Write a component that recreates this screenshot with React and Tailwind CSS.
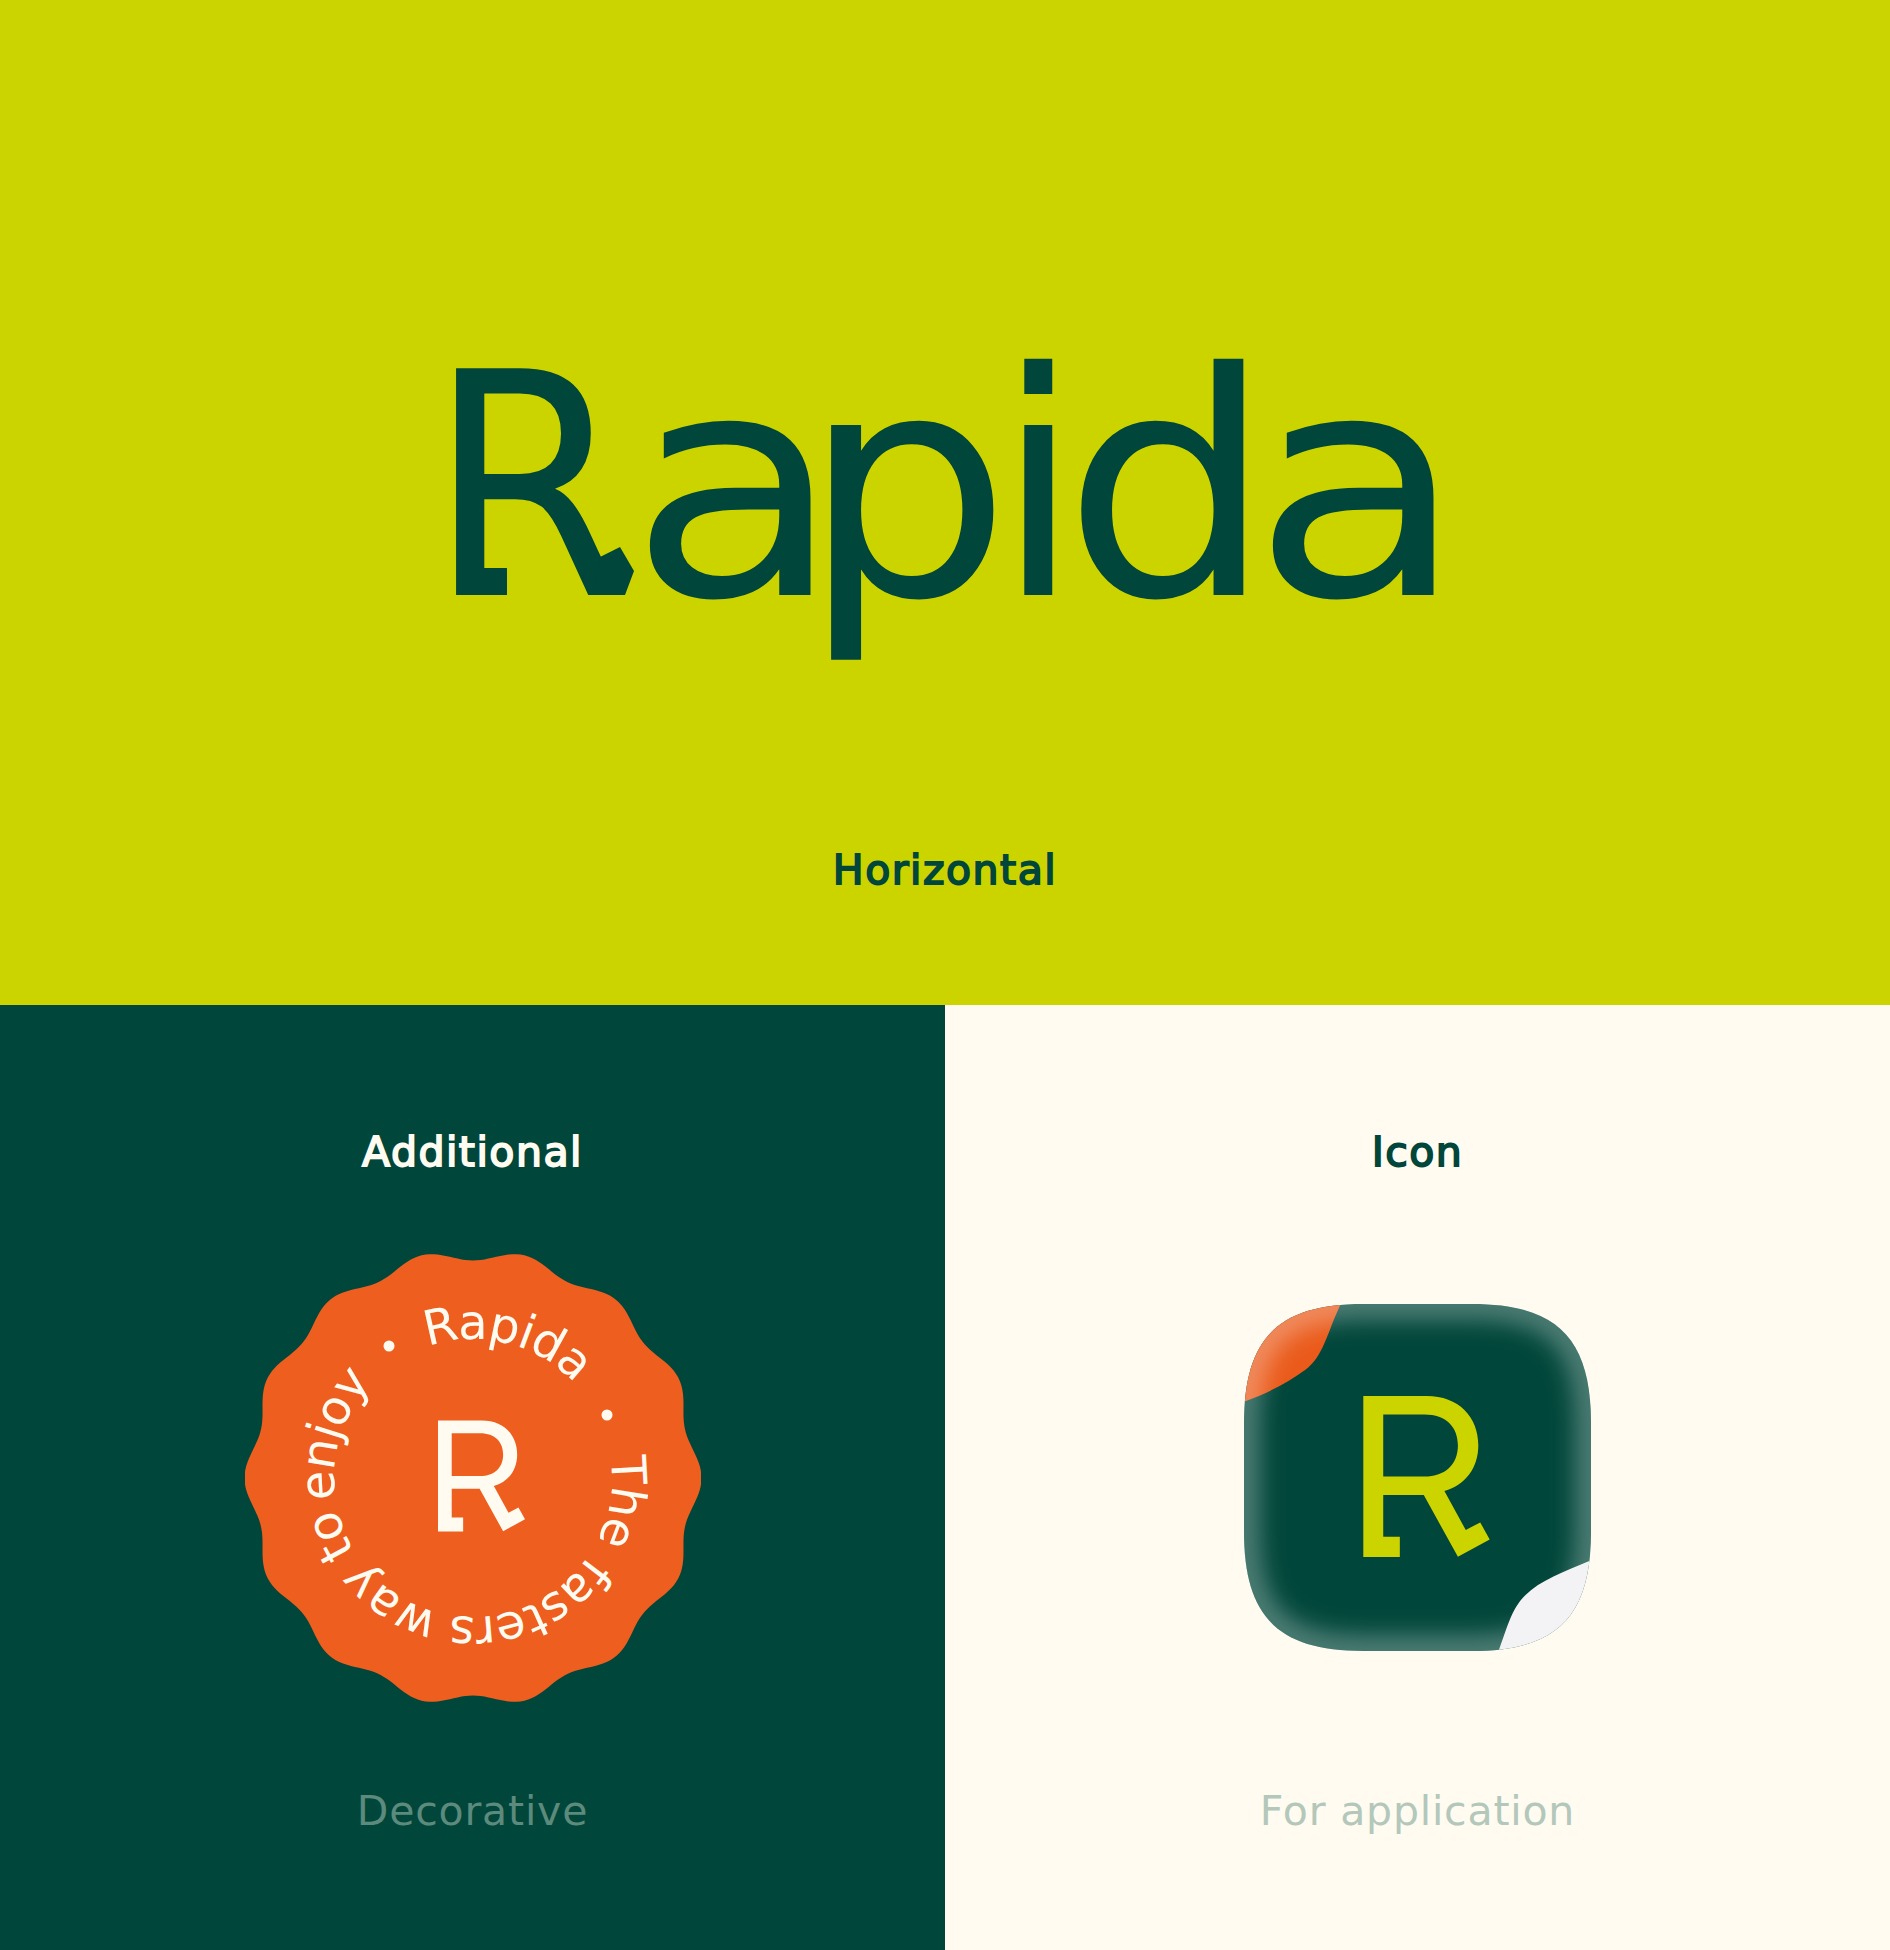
const DARK = "#01463a";

function scallopPath() {
  let d = "";
  for (let deg = 0; deg < 360; deg += 1) {
    const rad = (deg * Math.PI) / 180;
    const r = 223 + 5.5 * Math.cos(14 * (rad - Math.PI / 2));
    d += `${deg === 0 ? "M" : "L"}${(228 + r * Math.sin(rad)).toFixed(2)} ${(228 - r * Math.cos(rad)).toFixed(2)} `;
  }
  return d + "Z";
}

const MARK =
  "M78 87H345C480 87 563 175 563 295C563 390 510 462 420 488L510 652L571 620L611 692L477 765L333 505H162V681H232V766H78ZM162 165V427H335C425 427 477 375 477 295C477 220 430 165 335 165Z";

function Mark({ color, className }) {
  return (
    <svg viewBox="78 87 533 679" className={className} aria-hidden="true">
      <path d={MARK} fill={color} fillRule="evenodd" />
    </svg>
  );
}

function Badge() {
  const R = 139;
  const C = 2 * Math.PI * R;
  const words = [
    ["Rapida", -19],
    ["The", 81],
    ["fasters", 124],
    ["way", 194],
    ["to", 238],
    ["enjoy", 261],
  ];
  return (
    <div className="relative w-[456px] h-[456px]">
      <svg viewBox="0 0 456 456" className="w-full h-full">
        <path d={scallopPath()} fill="#ee5e1f" />
        <defs>
          <path id="ring" d={`M228 ${228 - R}A${R} ${R} 0 1 1 228 ${228 + R}A${R} ${R} 0 1 1 228 ${228 - R}`} />
        </defs>
        <g transform="rotate(-30 228 228)" fill="#fffbf0" style={{ fontFamily: "'DejaVu Sans', sans-serif", fontSize: 48, letterSpacing: -1 }}>
          {words.map(([w, a]) => (
            <text key={w}>
              <textPath href="#ring" startOffset={(((a + 30) / 360) * C).toFixed(1)}>{w}</textPath>
            </text>
          ))}
        </g>
        <circle cx="144" cy="96" r="5.5" fill="#fffbf0" />
        <circle cx="362" cy="165" r="5.5" fill="#fffbf0" />
      </svg>
      <Mark color="#fffbf0" className="absolute left-[193px] top-[170px] w-[87px] h-[112px]" />
    </div>
  );
}

function AppIcon() {
  const shape = "M400 42H724C980 42 1082 144 1082 400V724C1082 980 980 1082 724 1082H400C144 1082 42 980 42 724V400C42 144 144 42 400 42Z";
  return (
    <div className="relative w-[347px] h-[347px]">
      <svg viewBox="42 42 1040 1040" className="w-full h-full">
        <defs>
          <clipPath id="sq"><path d={shape} /></clipPath>
          <filter id="glow" x="-20%" y="-20%" width="140%" height="140%"><feGaussianBlur stdDeviation="38" /></filter>
        </defs>
        <g clipPath="url(#sq)">
          <rect x="0" y="0" width="1120" height="1120" fill={DARK} />
          <path d="M332 42C290 130 280 200 225 240C170 280 110 310 42 335V0H332Z" fill="#ea5a1a" />
          <path d={shape} fill="none" stroke="#ffffff" strokeOpacity="0.38" strokeWidth="76" filter="url(#glow)" />
          <path d="M1082 810C1000 845 930 870 885 915C845 955 835 1000 805 1082H1082Z" fill="#f3f3f5" />
        </g>
      </svg>
      <Mark color="#ccd400" className="absolute left-[119px] top-[92px] w-[127px] h-[161px]" />
    </div>
  );
}

const label = "text-[41px] leading-[50px] tracking-[1.5px] [-webkit-text-stroke:1.8px_currentColor]";
const sub = "text-[41px] leading-[50px] tracking-[0.8px]";

export default function App() {
  return (
    <div className="w-[1890px] h-[1950px] flex flex-col font-['DejaVu_Sans',sans-serif] overflow-hidden">
      <section className="h-[1005px] bg-[#ccd400] flex flex-col items-center text-[#01463a]">
        <div className="relative mt-[287px] ml-[3px] w-[1037px] h-[400px] leading-[400px] text-[311px] font-normal whitespace-nowrap">
          <span className="inline-block w-[201px] origin-left scale-x-[0.92]">R</span>
          <span className="inline-block w-[172px] origin-left scale-x-[1.118]">a</span>
          <span className="inline-block w-[194px] origin-left scale-x-[1.066]">p</span>
          <span className="inline-block w-[68px]">i</span>
          <span className="inline-block w-[189px] origin-left scale-x-[1.066]">d</span>
          <span className="inline-block w-[213px] origin-left scale-x-[1.118]">a</span>
          <svg className="absolute left-0 top-0 w-[300px] h-[400px]" viewBox="0 0 300 400" aria-hidden="true">
            <rect x="50" y="281" width="29" height="27" fill="#01463a" />
            <polygon points="172,270 192,260 206,284 197,308 165,308" fill="#01463a" />
          </svg>
        </div>
        <div className={`mt-[158px] ${label}`}>Horizontal</div>
      </section>
      <div className="flex h-[945px]">
        <section className="w-[945px] bg-[#01463a] flex flex-col items-center">
          <div className={`mt-[122px] text-[#fffbf0] ${label}`}>Additional</div>
          <div className="mt-[73px]"><Badge /></div>
          <div className={`mt-[80px] text-[#5c8a7c] ${sub}`}>Decorative</div>
        </section>
        <section className="w-[945px] bg-[#fffbf0] flex flex-col items-center">
          <div className={`mt-[122px] text-[#01463a] ${label}`}>Icon</div>
          <div className="mt-[127px]"><AppIcon /></div>
          <div className={`mt-[135px] text-[#b3c7bb] ${sub}`}>For application</div>
        </section>
      </div>
    </div>
  );
}
